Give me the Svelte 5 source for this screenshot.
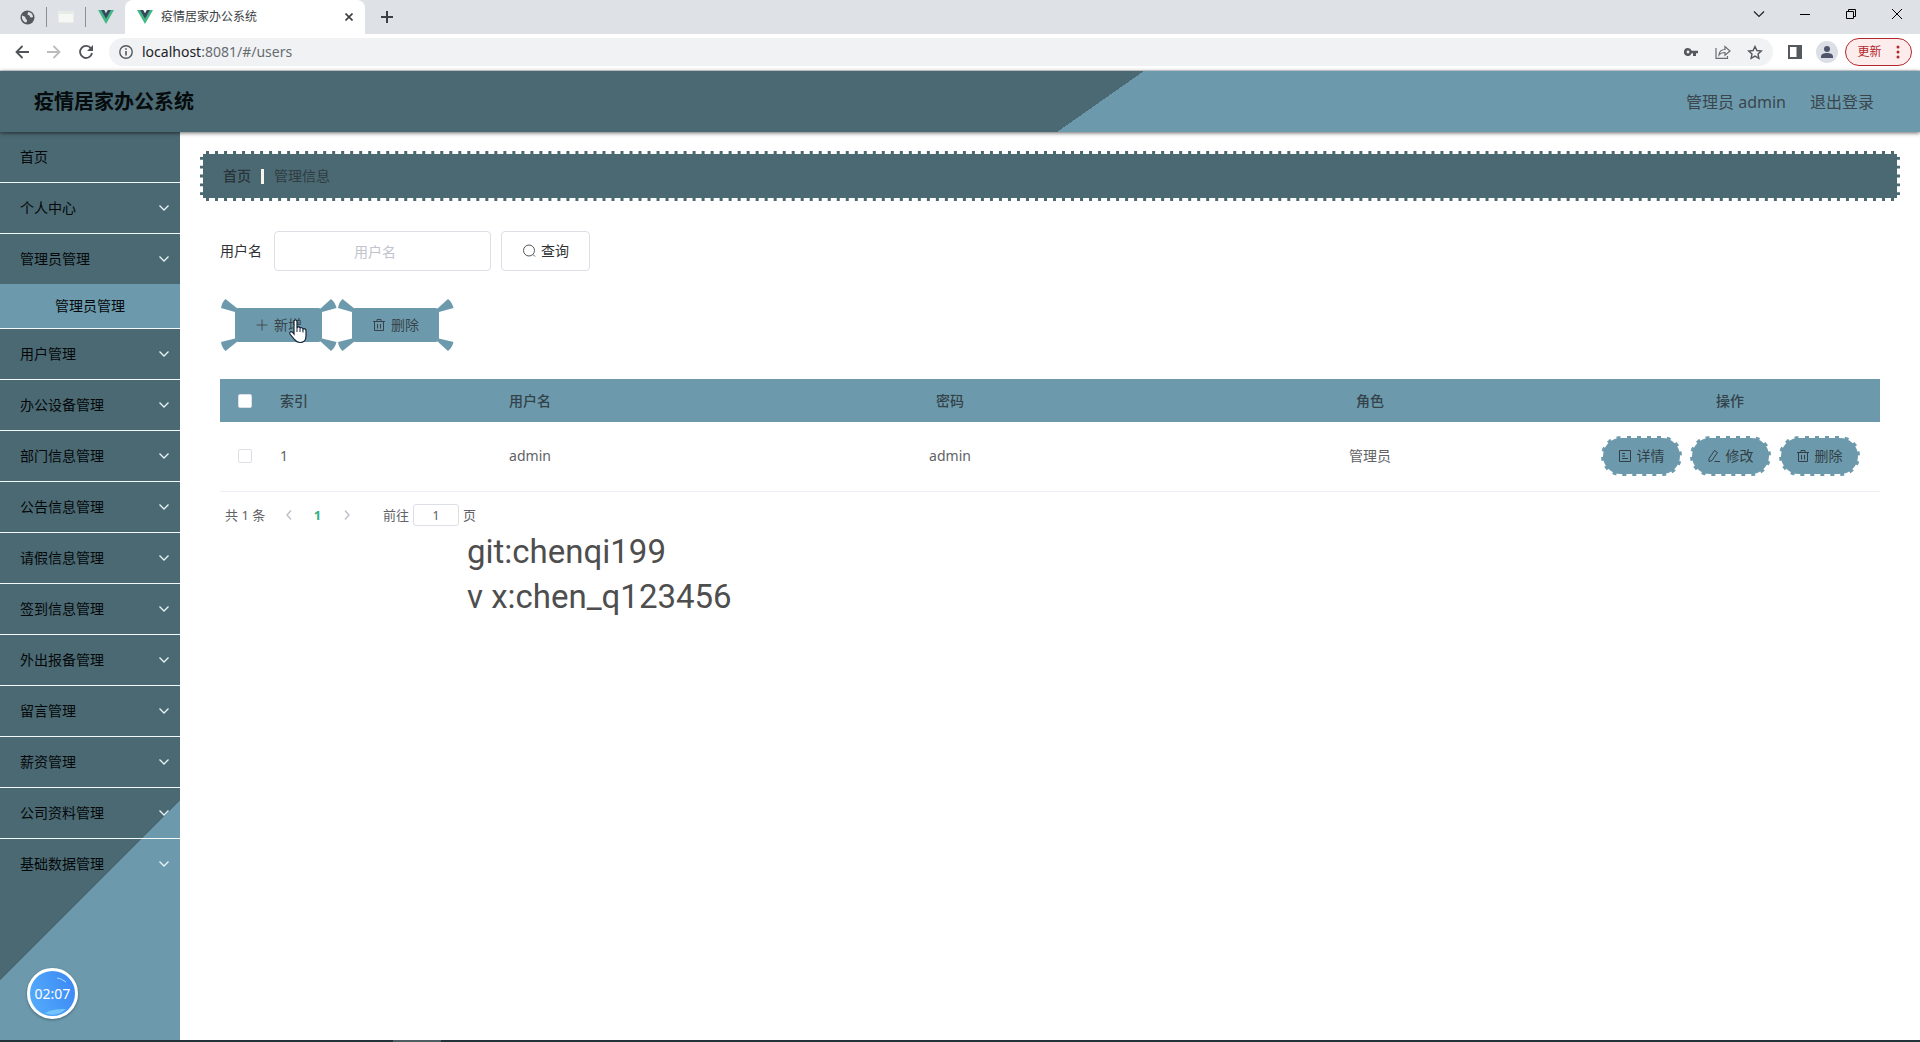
<script>
  const menu = [
    { label: '首页', leaf: true },
    { label: '个人中心' },
    { label: '管理员管理', children: ['管理员管理'] },
    { label: '用户管理' },
    { label: '办公设备管理' },
    { label: '部门信息管理' },
    { label: '公告信息管理' },
    { label: '请假信息管理' },
    { label: '签到信息管理' },
    { label: '外出报备管理' },
    { label: '留言管理' },
    { label: '薪资管理' },
    { label: '公司资料管理' },
    { label: '基础数据管理' }
  ];
  const rows = [{ index: 1, username: 'admin', password: 'admin', role: '管理员' }];
  let keyword = $state('');
  let page = $state('1');
</script>

{#snippet vue()}
  <svg class="vue" width="16" height="14" viewBox="0 0 16 14" aria-hidden="true">
    <path d="M0 0h3.4L8 8l4.600-8H16L8 14z" fill="#41b883" />
    <path d="M3 0h3.200L8 3.200 9.800 0H13L8 8.800z" fill="#35495e" />
  </svg>
{/snippet}

{#snippet trash()}
  <svg width="14" height="14" viewBox="0 0 14 14" fill="none" stroke="currentColor" aria-hidden="true">
    <path d="M1 3.500h12M2.500 3.500v9h9v-9M5 3V1.500h4V3M5.500 6v4.500M8.500 6v4.500" />
  </svg>
{/snippet}

{#snippet spikes()}
  <svg class="spikes" width="117" height="52" viewBox="0 0 117 52" fill="#6c9aac" aria-hidden="true">
    <path d="M1 9Q2 3 5.500 0L18 10L15 13Z" />
    <path d="M116.500 9Q115 3 111 0L100 10L102 13Z" />
    <path d="M1 43Q2 49 5.500 52L18 42L15 39.500Z" />
    <path d="M116.500 43Q115 49 111 52L100 42L102 39.500Z" />
  </svg>
{/snippet}

<div class="screen">
  <div class="tabs">
    <div class="pin">
      <svg width="15" height="15" viewBox="0 0 15 15" aria-hidden="true">
        <circle cx="7.500" cy="7.500" r="7" fill="#55585d" />
        <path d="M2 5.500c2 .5 3.500 1 3.500 2.500s1.500 1 1.500 2.500-.5 1.500-1 2C3.500 12 1.500 9.500 2 5.500zM8 2c1 1-1 1.500-.5 2.500S10 5 10 6.500s2 1 3 .5c0-2.500-2-5-5-5z" fill="#dee1e6" />
      </svg>
    </div>
    <div class="pin">
      <svg width="16" height="12" viewBox="0 0 16 12" aria-hidden="true">
        <rect x=".5" y=".5" width="15" height="11" fill="#f6f8f6" stroke="#e8ebea" />
        <path d="M1 2h14" stroke="#cfe5d3" />
      </svg>
    </div>
    <div class="pin last">{@render vue()}</div>
    <div class="tab">
      {@render vue()}
      <span>疫情居家办公系统</span>
      <button aria-label="关闭标签页">
        <svg width="8" height="8" viewBox="0 0 8 8" stroke="#3c4043" stroke-width="1.600" aria-hidden="true"><path d="M.5.5l7 7M7.500.5l-7 7" /></svg>
      </button>
    </div>
    <button class="plus" aria-label="新标签页">
      <svg width="12" height="12" viewBox="0 0 12 12" stroke="#3c4043" stroke-width="2" aria-hidden="true"><path d="M6 0v12M0 6h12" /></svg>
    </button>
    <div class="window">
      <button aria-label="搜索标签页"><svg width="12" height="8" viewBox="0 0 12 8" fill="none" stroke="#222" stroke-width="1.200"><path d="M1 1.500l5 5 5-5" /></svg></button>
      <button aria-label="最小化"><svg width="10" height="10" viewBox="0 0 10 10" stroke="#000"><path d="M0 5.500h10" /></svg></button>
      <button aria-label="还原"><svg width="10" height="10" viewBox="0 0 10 10" fill="none" stroke="#000"><path d="M.5 2.500h7v7h-7zM2.500 2.500v-2h7v7h-2" /></svg></button>
      <button aria-label="关闭"><svg width="10" height="10" viewBox="0 0 10 10" stroke="#000"><path d="M0 0l10 10M10 0L0 10" /></svg></button>
    </div>
  </div>

  <div class="toolbar">
    <button class="tool" aria-label="后退"><svg width="14" height="14" viewBox="0 0 14 14" fill="none" stroke="#505357" stroke-width="1.800"><path d="M14 7H1.500M7.500 1L1.500 7l6 6" /></svg></button>
    <button class="tool" aria-label="前进"><svg width="14" height="14" viewBox="0 0 14 14" fill="none" stroke="#babcbe" stroke-width="1.800"><path d="M0 7h12.500M6.500 1l6 6-6 6" /></svg></button>
    <button class="tool" aria-label="重新加载"><svg width="14" height="14" viewBox="0 0 14 14"><path d="M12 3.500A6 6 0 1 0 13 8" fill="none" stroke="#505357" stroke-width="1.800" /><path d="M14 0v6H8z" fill="#505357" /></svg></button>
    <div class="address">
      <svg width="14" height="14" viewBox="0 0 14 14" fill="none" stroke="#55585d" stroke-width="1.400" aria-hidden="true"><circle cx="7" cy="7" r="6.200" /><path d="M7 6v4.500M7 3.300v1.500" stroke-width="1.600" /></svg>
      <span class="url"><b>localhost</b>:8081/#/users</span>
      <button class="tool" aria-label="密码"><svg width="14" height="8" viewBox="0 0 14 8"><path d="M4 0a4 4 0 1 0 3.700 5.300H9V8h3V5.300h2V2.700H7.700A4 4 0 0 0 4 0zm0 2.600a1.400 1.400 0 1 1 0 2.800 1.400 1.400 0 0 1 0-2.800z" fill="#55585d" fill-rule="evenodd" /></svg></button>
      <button class="tool" aria-label="分享"><svg width="16" height="14" viewBox="0 0 16 14" fill="none" stroke="#6a6d71" stroke-width="1.200"><path d="M1 3v10.300h11.500V11M4 10c.3-4 2.500-5.500 6-5.500V1.500L15 6l-5 4.200V7.500C7 7.500 5.500 8 4 10z" /></svg></button>
      <button class="tool" aria-label="收藏"><svg width="16" height="15" viewBox="0 0 16 15" fill="none" stroke="#55585d" stroke-width="1.400"><path d="M8 1.500l1.900 4 4.400.5L11 9l.9 4.300L8 11.100l-3.900 2.200L5 9 1.700 6l4.400-.5z" /></svg></button>
    </div>
    <button class="tool" aria-label="侧边栏"><svg width="14" height="14" viewBox="0 0 14 14"><path d="M0 0h14v14H0zM2 2v10h6.500V2z" fill="#55585d" fill-rule="evenodd" /></svg></button>
    <button class="tool" aria-label="用户"><svg width="22" height="22" viewBox="0 0 22 22"><circle cx="11" cy="11" r="11" fill="#dcdfe6" /><circle cx="11" cy="8" r="3" fill="#4f566b" /><path d="M5 17v-1.500c0-2.500 3-3.500 6-3.500s6 1 6 3.500V17z" fill="#4f566b" /></svg></button>
    <button class="update">更新
      <svg width="4" height="14" viewBox="0 0 4 14" fill="#b3282d" aria-hidden="true"><circle cx="2" cy="2" r="1.500" /><circle cx="2" cy="7" r="1.500" /><circle cx="2" cy="12" r="1.500" /></svg>
    </button>
  </div>

  <header>
    <h1>疫情居家办公系统</h1>
    <span>管理员 admin</span>
    <a href="#/login">退出登录</a>
  </header>

  <div class="body">
    <nav>
      {#each menu as item}
        <a class="item" href="#/users">
          {item.label}
          {#if !item.leaf}
            <svg width="10" height="6" viewBox="0 0 10 6" fill="none" stroke="#e8f4f8" stroke-width="1.300" aria-hidden="true"><path d="M.5.5L5 5 9.500.5" /></svg>
          {/if}
        </a>
        {#each item.children ?? [] as child}
          <a class="child" href="#/users">{child}</a>
        {/each}
      {/each}
    </nav>

    <main>
      <div class="crumbs">
        <a href="#/">首页</a>
        <i></i>
        <span>管理信息</span>
      </div>

      <section>
        <form class="search">
          <label for="name">用户名</label>
          <input id="name" placeholder="用户名" bind:value={keyword} />
          <button type="button">
            <svg width="14" height="14" viewBox="0 0 14 14" fill="none" stroke="#555" aria-hidden="true"><circle cx="7" cy="6.500" r="5.500" /><path d="M11 10.500l2 2" /></svg>
            查询
          </button>
        </form>

        <div class="actions">
          <button>
            {@render spikes()}
            <span>
              <svg width="14" height="14" viewBox="0 0 14 14" stroke="#454c52" aria-hidden="true"><path d="M7 1.500v11M1.500 7h11" /></svg>
              新增
            </span>
          </button>
          <button>
            {@render spikes()}
            <span>{@render trash()}删除</span>
          </button>
          <svg class="cursor" width="20" height="25" viewBox="0 0 20 25" aria-hidden="true">
            <path d="M6 15V2.500C6 .5 9 .5 9 2.500V9c.5-1.500 3-1.300 3 .5.5-1.300 3-1 3 .8.700-1 3-.7 3 1.200V17c0 4-2 6.500-6 6.500-3.500 0-4.500-1.500-6-3.500l-4-5c-1-2 1-3 2.500-1.800z" fill="#fff" stroke="#152436" stroke-width="1.200" />
            <path d="M9 9v4M12 10v3M15 11v2.500" stroke="#152436" />
          </svg>
        </div>

        <table>
          <colgroup>
            <col class="narrow" /><col class="narrow" /><col /><col /><col /><col class="ops" />
          </colgroup>
          <thead>
            <tr>
              <th><input type="checkbox" aria-label="全选" /></th>
              <th class="left">索引</th>
              <th>用户名</th>
              <th>密码</th>
              <th>角色</th>
              <th>操作</th>
            </tr>
          </thead>
          <tbody>
            {#each rows as row}
              <tr>
                <td><input type="checkbox" aria-label="选择" /></td>
                <td class="left">{row.index}</td>
                <td>{row.username}</td>
                <td>{row.password}</td>
                <td>{row.role}</td>
                <td>
                  <div class="row-actions">
                    <button>
                      <svg width="14" height="14" viewBox="0 0 14 14" fill="none" stroke="currentColor" aria-hidden="true"><path d="M1.500 1.500h11v11h-11zM4 4.500h3M4 7h3M4 9.500h6" /></svg>
                      详情
                    </button>
                    <button>
                      <svg width="14" height="14" viewBox="0 0 14 14" fill="none" stroke="currentColor" aria-hidden="true"><path d="M2 9.500L7.500 1.500l3 2L5 11.500l-3 1zM7.500 12.500H13" /></svg>
                      修改
                    </button>
                    <button>{@render trash()}删除</button>
                  </div>
                </td>
              </tr>
            {/each}
          </tbody>
        </table>

        <div class="pager">
          <span class="total">共 1 条</span>
          <button aria-label="上一页"><svg width="6" height="10" viewBox="0 0 6 10" fill="none" stroke="#bcc0c8" stroke-width="1.400"><path d="M5 .5L1 5l4 4.500" /></svg></button>
          <button class="current">1</button>
          <button aria-label="下一页"><svg width="6" height="10" viewBox="0 0 6 10" fill="none" stroke="#bcc0c8" stroke-width="1.400"><path d="M1 .5L5 5 1 9.500" /></svg></button>
          <label for="page">前往</label>
          <input id="page" bind:value={page} />
          <span>页</span>
        </div>

        <p class="note">git:chenqi199<br />v x:chen_q123456</p>
      </section>
    </main>
  </div>

  <div class="taskbar"><i></i></div>

  <div class="timer">
    <svg width="44" height="44" viewBox="0 0 44 44" fill="none" aria-hidden="true">
      <path d="M14 41c5-3 11-4 21-4-6 6-14 7-21 4z" fill="#73c4fb" />
      <path d="M26 6l4 1M30 7l5 3" stroke="#a8dcff" />
    </svg>
    <span>02:07</span>
  </div>
</div>

<style>
  :global(body) {
    margin: 0;
  }
  .screen {
    --dark: #4b6972;
    --light: #6c9aac;
    position: relative;
    display: flex;
    flex-direction: column;
    min-height: 100vh;
    font-family: 'Noto Sans', 'Noto Sans CJK SC', sans-serif;
    font-size: 14px;
    line-height: 20px;
    color: #303133;
    background: #fff;
  }
  .screen * {
    box-sizing: border-box;
  }
  button {
    display: flex;
    align-items: center;
    justify-content: center;
    padding: 0;
    border: 0;
    background: none;
    font: inherit;
    color: inherit;
  }
  a {
    color: inherit;
    text-decoration: none;
  }
  svg {
    flex: none;
  }

  .tabs {
    display: flex;
    height: 34px;
    padding-left: 8px;
    background: #dee1e6;
  }
  .pin {
    display: flex;
    align-items: center;
    justify-content: center;
    width: 39px;
    height: 20px;
    margin-top: 7px;
    border-right: 1px solid #8b8e93;
  }
  .pin.last {
    border: 0;
  }
  .tab {
    display: flex;
    align-items: center;
    width: 240px;
    margin-right: 12px;
    padding: 0 12px;
    border-radius: 8px 8px 0 0;
    background: #fff;
    font-size: 12px;
    color: #3c4043;
  }
  .tab span {
    flex: 1;
    padding-left: 8px;
  }
  .tab button {
    width: 8px;
  }
  .plus {
    width: 20px;
  }
  .window {
    display: flex;
    height: 28px;
    margin-left: auto;
  }
  .window button {
    width: 46px;
  }

  .toolbar {
    display: flex;
    align-items: center;
    height: 37px;
    padding: 0 8px 0 6px;
    border-bottom: 1px solid #dcdee1;
  }
  .tool {
    width: 32px;
    height: 28px;
  }
  .address {
    display: flex;
    align-items: center;
    flex: 1;
    height: 28px;
    margin: 0 6px 0 7px;
    padding: 0 2px 0 10px;
    border-radius: 14px;
    background: #f0f2f4;
  }
  .url {
    flex: 1;
    padding-left: 9px;
    color: #686c71;
  }
  .url b {
    font-weight: 400;
    color: #202124;
  }
  .update {
    gap: 14px;
    width: 67px;
    height: 28px;
    margin-left: 2px;
    border: 1px solid #b3282d;
    border-radius: 14px;
    background: #fcecec;
    font-size: 12px;
    color: #b3282d;
  }

  header {
    position: relative;
    z-index: 1;
    display: flex;
    align-items: center;
    gap: 24px;
    height: 61px;
    padding: 0 46px 0 34px;
    background: linear-gradient(145deg, var(--dark) 57%, var(--light) 57%);
    box-shadow: 0 1px 4px #0009;
    font-size: 16px;
    color: #3a464d;
  }
  h1 {
    flex: 1;
    margin: 0;
    font-size: 20px;
    font-weight: 700;
    color: #060b0d;
  }

  .body {
    display: flex;
    flex: 1;
  }
  nav {
    width: 180px;
    background: linear-gradient(135deg, var(--dark) 600px, var(--light) 600px);
    color: #04080a;
  }
  .item {
    display: flex;
    align-items: center;
    justify-content: space-between;
    height: 51px;
    padding: 0 11px 0 20px;
    border-bottom: 1px solid #f2f9fb;
  }
  .item:last-child,
  .item:has(+ .child) {
    border-color: transparent;
  }
  .child {
    display: flex;
    align-items: center;
    justify-content: center;
    height: 45px;
    margin-top: -1px;
    border-bottom: 1px solid #f2f9fb;
    background: var(--light);
  }

  main {
    flex: 1;
    min-width: 0;
    padding: 19px 20px 20px;
  }
  .crumbs {
    display: flex;
    align-items: center;
    height: 50px;
    padding: 0 20px;
    border: 3px dashed #fff;
    background: var(--dark);
    color: #2f3c42;
  }
  .crumbs a {
    font-weight: 500;
    color: #28343a;
  }
  .crumbs i {
    width: 3px;
    height: 15px;
    margin: 0 10px;
    background: #f8f6ea;
  }
  section {
    position: relative;
    padding: 30px 20px 0;
  }
  .search {
    display: flex;
    align-items: center;
  }
  .search input {
    width: 217px;
    height: 40px;
    margin: 0 10px 0 12px;
    padding: 0 30px 0 15px;
    border: 1px solid #dcdfe6;
    border-radius: 4px;
    font: inherit;
    text-align: center;
  }
  .search input::placeholder {
    color: #c0c4cc;
  }
  .search button {
    gap: 5px;
    width: 89px;
    height: 40px;
    border: 1px solid #dcdfe6;
    border-radius: 4px;
  }

  .actions {
    position: relative;
    display: flex;
    margin-top: 28px;
  }
  .actions button {
    position: relative;
    width: 117px;
    height: 52px;
    color: #39434a;
  }
  .spikes {
    position: absolute;
    inset: 0;
  }
  .actions span {
    position: relative;
    display: flex;
    align-items: center;
    justify-content: center;
    gap: 5px;
    width: 87px;
    height: 34px;
    border-radius: 4px;
    background: var(--light);
  }
  .cursor {
    position: absolute;
    left: 68px;
    top: 20px;
  }

  table {
    width: 100%;
    margin-top: 28px;
    border-collapse: collapse;
    table-layout: fixed;
    text-align: center;
    color: #606266;
  }
  .narrow {
    width: 50px;
  }
  .ops {
    width: 300px;
  }
  th {
    height: 43px;
    padding: 0;
    background: var(--light);
    font-weight: 500;
    color: #34424a;
  }
  td {
    height: 69px;
    padding: 0;
    border-bottom: 1px solid #ebeef5;
  }
  .left {
    padding-left: 10px;
    text-align: left;
  }
  input[type='checkbox'] {
    display: block;
    appearance: none;
    width: 14px;
    height: 14px;
    margin: 0 auto;
    border: 1px solid #dcdfe6;
    border-radius: 2px;
    background: #fff;
  }
  .row-actions {
    display: flex;
    justify-content: center;
    gap: 8px;
  }
  .row-actions button {
    gap: 5px;
    width: 81px;
    height: 40px;
    border: 2px dashed #fff;
    border-radius: 20px;
    background: var(--light);
    color: #333f46;
  }

  .pager {
    display: flex;
    align-items: center;
    height: 22px;
    margin-top: 12px;
    padding-left: 5px;
    font-size: 13px;
    color: #606266;
  }
  .total {
    width: 49px;
  }
  .pager button {
    width: 29px;
  }
  .pager .current {
    font-weight: 700;
    color: #36b183;
  }
  .pager label {
    margin-left: 22px;
  }
  .pager input {
    width: 46px;
    height: 22px;
    margin: 0 4px;
    border: 1px solid #dcdfe6;
    border-radius: 3px;
    font: inherit;
    color: inherit;
    text-align: center;
  }
  .note {
    margin: 3px 0 0 247px;
    font-family: Roboto, sans-serif;
    font-size: 33px;
    line-height: 45px;
    color: #4e4e4e;
  }

  .taskbar {
    height: 2px;
    background: #22333b;
  }
  .taskbar i {
    display: block;
    width: 48px;
    height: 2px;
    margin-left: 393px;
    background: #4d5d61;
  }
  .timer {
    position: absolute;
    left: 27px;
    bottom: 23px;
    display: grid;
    place-items: center;
    width: 51px;
    height: 51px;
    border: 3px solid #fff;
    border-radius: 50%;
    background: linear-gradient(70deg, #55aefa, #3a86f5);
    box-shadow: 0 1px 3px #0005;
    color: #fff;
  }
  .timer > * {
    grid-area: 1 / 1;
  }
</style>
